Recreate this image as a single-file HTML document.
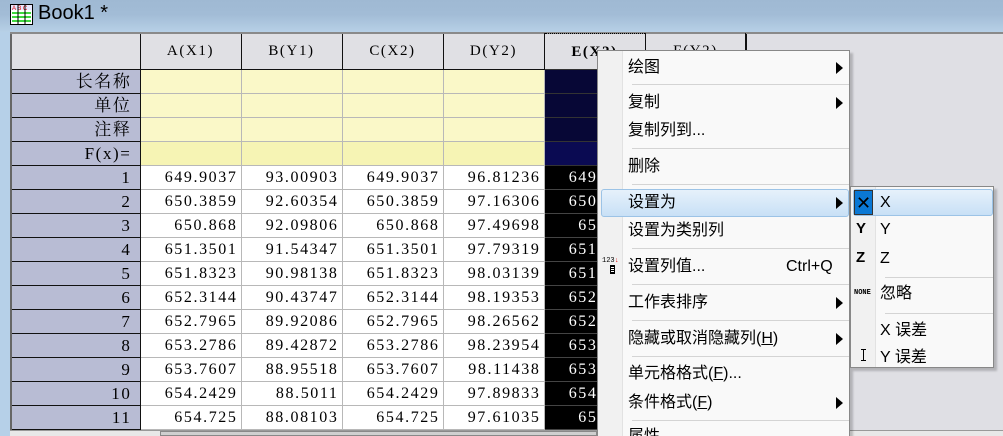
<!DOCTYPE html>
<html><head><meta charset="utf-8"><style>
*{margin:0;padding:0;box-sizing:border-box}
html,body{width:1003px;height:436px;overflow:hidden}
body{position:relative;background:#dfdfe4;font-family:"Liberation Sans","Noto Sans CJK SC",sans-serif}
.title{position:absolute;left:0;top:0;width:1003px;height:32px;background:linear-gradient(#9fb9d3,#a2bcd6 45%,#b7d0e6);}
.title span{position:absolute;left:38px;top:2px;font-size:20px;color:#000}
.lb{position:absolute;left:0;top:32px;width:10px;height:404px;background:#b6d0e8}
.topline{position:absolute;left:10px;top:32px;width:993px;height:2px;background:#8a8a8a}
table{position:absolute;left:10px;top:33px;border-collapse:collapse;table-layout:fixed;font-family:"Liberation Serif","Noto Serif CJK SC",serif;font-size:16px;letter-spacing:1.6px}
td{height:24px;border:1px solid #b8b8b8;text-align:right;padding-right:3px;background:#fff;white-space:nowrap;overflow:hidden;line-height:22px}
tr.h td{height:36px;background:#e0e0e4;text-align:center;border:1px solid #111;border-top:none;padding:0;font-size:15px}
td.rl{background:#b8bcd4;border:1px solid #111;border-left:2px solid #666;padding-right:8px;font-family:"Liberation Serif","Noto Serif CJK SC",serif;font-size:17px}
td.y{background:#faf8c8}
tr.f td.y{background:#f6f4b4}
td.sel{background:#070736;border-color:#333;color:#fff}
td.sb{background:#000;color:#fff;border-color:#444}
.menu{position:absolute;left:597px;top:50px;width:253px;height:386px;background:#f9f9f9;border:1px solid #888;border-bottom:none;box-shadow:3px 3px 2px rgba(0,0,0,.2);font-size:16px}
.menu .ic{position:absolute;left:0;top:0;width:25px;height:100%;background:#f1f1f1;border-right:1px solid #e2e2e2}
.it{position:absolute;left:30px;color:#000;height:20px;line-height:20px}
.sep{position:absolute;left:34px;right:0;height:1px;background:#d4d4d4}
.ar{position:absolute;right:6px;width:0;height:0;border-top:6px solid transparent;border-bottom:6px solid transparent;border-left:7px solid #000}
.hl{position:absolute;left:3px;width:248px;height:28px;top:138px;border:1px solid #9cc3e6;border-radius:3px;background:linear-gradient(#e6f1fb,#c8e0f6)}
.sub{position:absolute;left:850px;top:186px;width:144px;height:182px;background:#f9f9f9;border:1px solid #888;box-shadow:3px 3px 2px rgba(0,0,0,.2);font-size:16px}
.sub .ic{position:absolute;left:0;top:0;width:25px;height:100%;background:#f1f1f1;border-right:1px solid #e2e2e2}
.sub .it{left:29px}
.si{position:absolute;left:5px;font-weight:bold;font-size:15px}
</style></head><body>
<div class="title">
<svg style="position:absolute;left:10px;top:4px" width="23" height="21"><rect x="0.5" y="0.5" width="22" height="20" fill="#fff" stroke="#000"/><rect x="1" y="1" width="21" height="5" fill="#e8e8ff"/><text x="2" y="6" font-size="6" fill="#d00" font-family="Liberation Sans">A B C</text><g stroke="#0c0" stroke-width="1.5"><line x1="2" y1="9" x2="21" y2="9"/><line x1="2" y1="13" x2="21" y2="13"/><line x1="2" y1="17" x2="21" y2="17"/></g><g stroke="#000"><line x1="8" y1="1" x2="8" y2="20"/><line x1="15" y1="1" x2="15" y2="20"/></g></svg>
<span>Book1 *</span></div>
<div class="lb"></div>
<div class="topline"></div>
<table>
<colgroup><col style="width:129px"><col style="width:101px"><col style="width:101px"><col style="width:101px"><col style="width:101px"><col style="width:101px"><col style="width:101px"></colgroup>
<tr class="h"><td style="border-left:2px solid #666"></td><td>A(X1)</td><td>B(Y1)</td><td>C(X2)</td><td>D(Y2)</td><td style="border:1px dotted #000;font-weight:bold">E(X2)</td><td>F(Y2)</td></tr>
<tr><td class="rl">长名称</td><td class="y"></td><td class="y"></td><td class="y"></td><td class="y"></td><td class="sel"></td><td></td></tr>
<tr><td class="rl">单位</td><td class="y"></td><td class="y"></td><td class="y"></td><td class="y"></td><td class="sel"></td><td></td></tr>
<tr><td class="rl">注释</td><td class="y"></td><td class="y"></td><td class="y"></td><td class="y"></td><td class="sel"></td><td></td></tr>
<tr class="f"><td class="rl">F(x)=</td><td class="y"></td><td class="y"></td><td class="y"></td><td class="y"></td><td class="sel" style="background:#0a0a52"></td><td></td></tr>
<tr><td class="rl">1</td><td>649.9037</td><td>93.00903</td><td>649.9037</td><td>96.81236</td><td class="sb">649.9037</td><td></td></tr>
<tr><td class="rl">2</td><td>650.3859</td><td>92.60354</td><td>650.3859</td><td>97.16306</td><td class="sb">650.3859</td><td></td></tr>
<tr><td class="rl">3</td><td>650.868</td><td>92.09806</td><td>650.868</td><td>97.49698</td><td class="sb">650.868</td><td></td></tr>
<tr><td class="rl">4</td><td>651.3501</td><td>91.54347</td><td>651.3501</td><td>97.79319</td><td class="sb">651.3501</td><td></td></tr>
<tr><td class="rl">5</td><td>651.8323</td><td>90.98138</td><td>651.8323</td><td>98.03139</td><td class="sb">651.8323</td><td></td></tr>
<tr><td class="rl">6</td><td>652.3144</td><td>90.43747</td><td>652.3144</td><td>98.19353</td><td class="sb">652.3144</td><td></td></tr>
<tr><td class="rl">7</td><td>652.7965</td><td>89.92086</td><td>652.7965</td><td>98.26562</td><td class="sb">652.7965</td><td></td></tr>
<tr><td class="rl">8</td><td>653.2786</td><td>89.42872</td><td>653.2786</td><td>98.23954</td><td class="sb">653.2786</td><td></td></tr>
<tr><td class="rl">9</td><td>653.7607</td><td>88.95518</td><td>653.7607</td><td>98.11438</td><td class="sb">653.7607</td><td></td></tr>
<tr><td class="rl">10</td><td>654.2429</td><td>88.5011</td><td>654.2429</td><td>97.89833</td><td class="sb">654.2429</td><td></td></tr>
<tr><td class="rl">11</td><td>654.725</td><td>88.08103</td><td>654.725</td><td>97.61035</td><td class="sb">654.725</td><td></td></tr>
</table>
<div style="position:absolute;left:10px;top:430px;width:993px;height:6px;background:#e8e8e8;border-top:1px solid #999"></div>
<div style="position:absolute;left:160px;top:431px;width:437px;height:5px;background:#cfcfcf;border:1px solid #888"></div>
<div style="position:absolute;left:745px;top:33px;width:1px;height:35px;background:#111"></div>

<div class="menu">
<div class="ic"></div>
<div class="hl"></div>
<div class="it" style="top:7px">绘图</div><div class="ar" style="top:11px"></div>
<div class="sep" style="top:33px"></div>
<div class="it" style="top:42px">复制</div><div class="ar" style="top:46px"></div>
<div class="it" style="top:70px">复制列到...</div>
<div class="sep" style="top:97px"></div>
<div class="it" style="top:106px">删除</div>
<div class="sep" style="top:133px"></div>
<div class="it" style="top:142px">设置为</div><div class="ar" style="top:146px"></div>
<div class="it" style="top:170px">设置为类别列</div>
<div class="sep" style="top:197px"></div>
<div style="position:absolute;left:4px;top:206px;font-size:7px;font-family:'Liberation Mono',monospace">123<span style="color:#d00">↓</span></div>
<div style="position:absolute;left:12px;top:214px;width:5px;height:9px;border:1px solid #000;background:repeating-linear-gradient(#000 0 1px,#fff 1px 2px)"></div>
<div class="it" style="top:206px">设置列值...</div><div class="it" style="top:206px;left:188px">Ctrl+Q</div>
<div class="sep" style="top:233px"></div>
<div class="it" style="top:242px">工作表排序</div><div class="ar" style="top:246px"></div>
<div class="sep" style="top:269px"></div>
<div class="it" style="top:278px">隐藏或取消隐藏列(<u>H</u>)</div><div class="ar" style="top:282px"></div>
<div class="sep" style="top:305px"></div>
<div class="it" style="top:313px">单元格格式(<u>F</u>)...</div>
<div class="it" style="top:342px">条件格式(<u>F</u>)</div><div class="ar" style="top:346px"></div>
<div class="sep" style="top:369px"></div>
<div class="it" style="top:376px">属性</div>
</div>

<div class="sub">
<div class="ic"></div>
<div style="position:absolute;left:2px;top:2px;width:140px;height:27px;border:1px solid #9cc3e6;border-radius:3px;background:linear-gradient(#e6f1fb,#c8e0f6)"></div>
<div style="position:absolute;left:3px;top:3px;width:19px;height:25px;background:#0a78d4;border:1px solid #333;color:#000;text-align:center;line-height:24px;font-size:18px">✕</div>
<div class="it" style="top:6px">X</div>
<div class="si" style="top:33px">Y</div><div class="it" style="top:33px">Y</div>
<div class="si" style="top:62px">Z</div><div class="it" style="top:62px">Z</div>
<div class="sep" style="top:90px;left:34px"></div>
<div style="position:absolute;left:3px;top:102px;font-size:7px;font-weight:bold;font-family:'Liberation Mono',monospace">NONE</div>
<div class="it" style="top:97px">忽略</div>
<div class="sep" style="top:126px;left:34px"></div>
<div class="it" style="top:134px">X 误差</div>
<div style="position:absolute;left:10px;top:162px;width:5px;height:12px;border-top:1px solid #000;border-bottom:1px solid #000"><div style="margin-left:2px;width:1px;height:10px;background:#000"></div></div>
<div class="it" style="top:161px">Y 误差</div>
</div>
</body></html>
